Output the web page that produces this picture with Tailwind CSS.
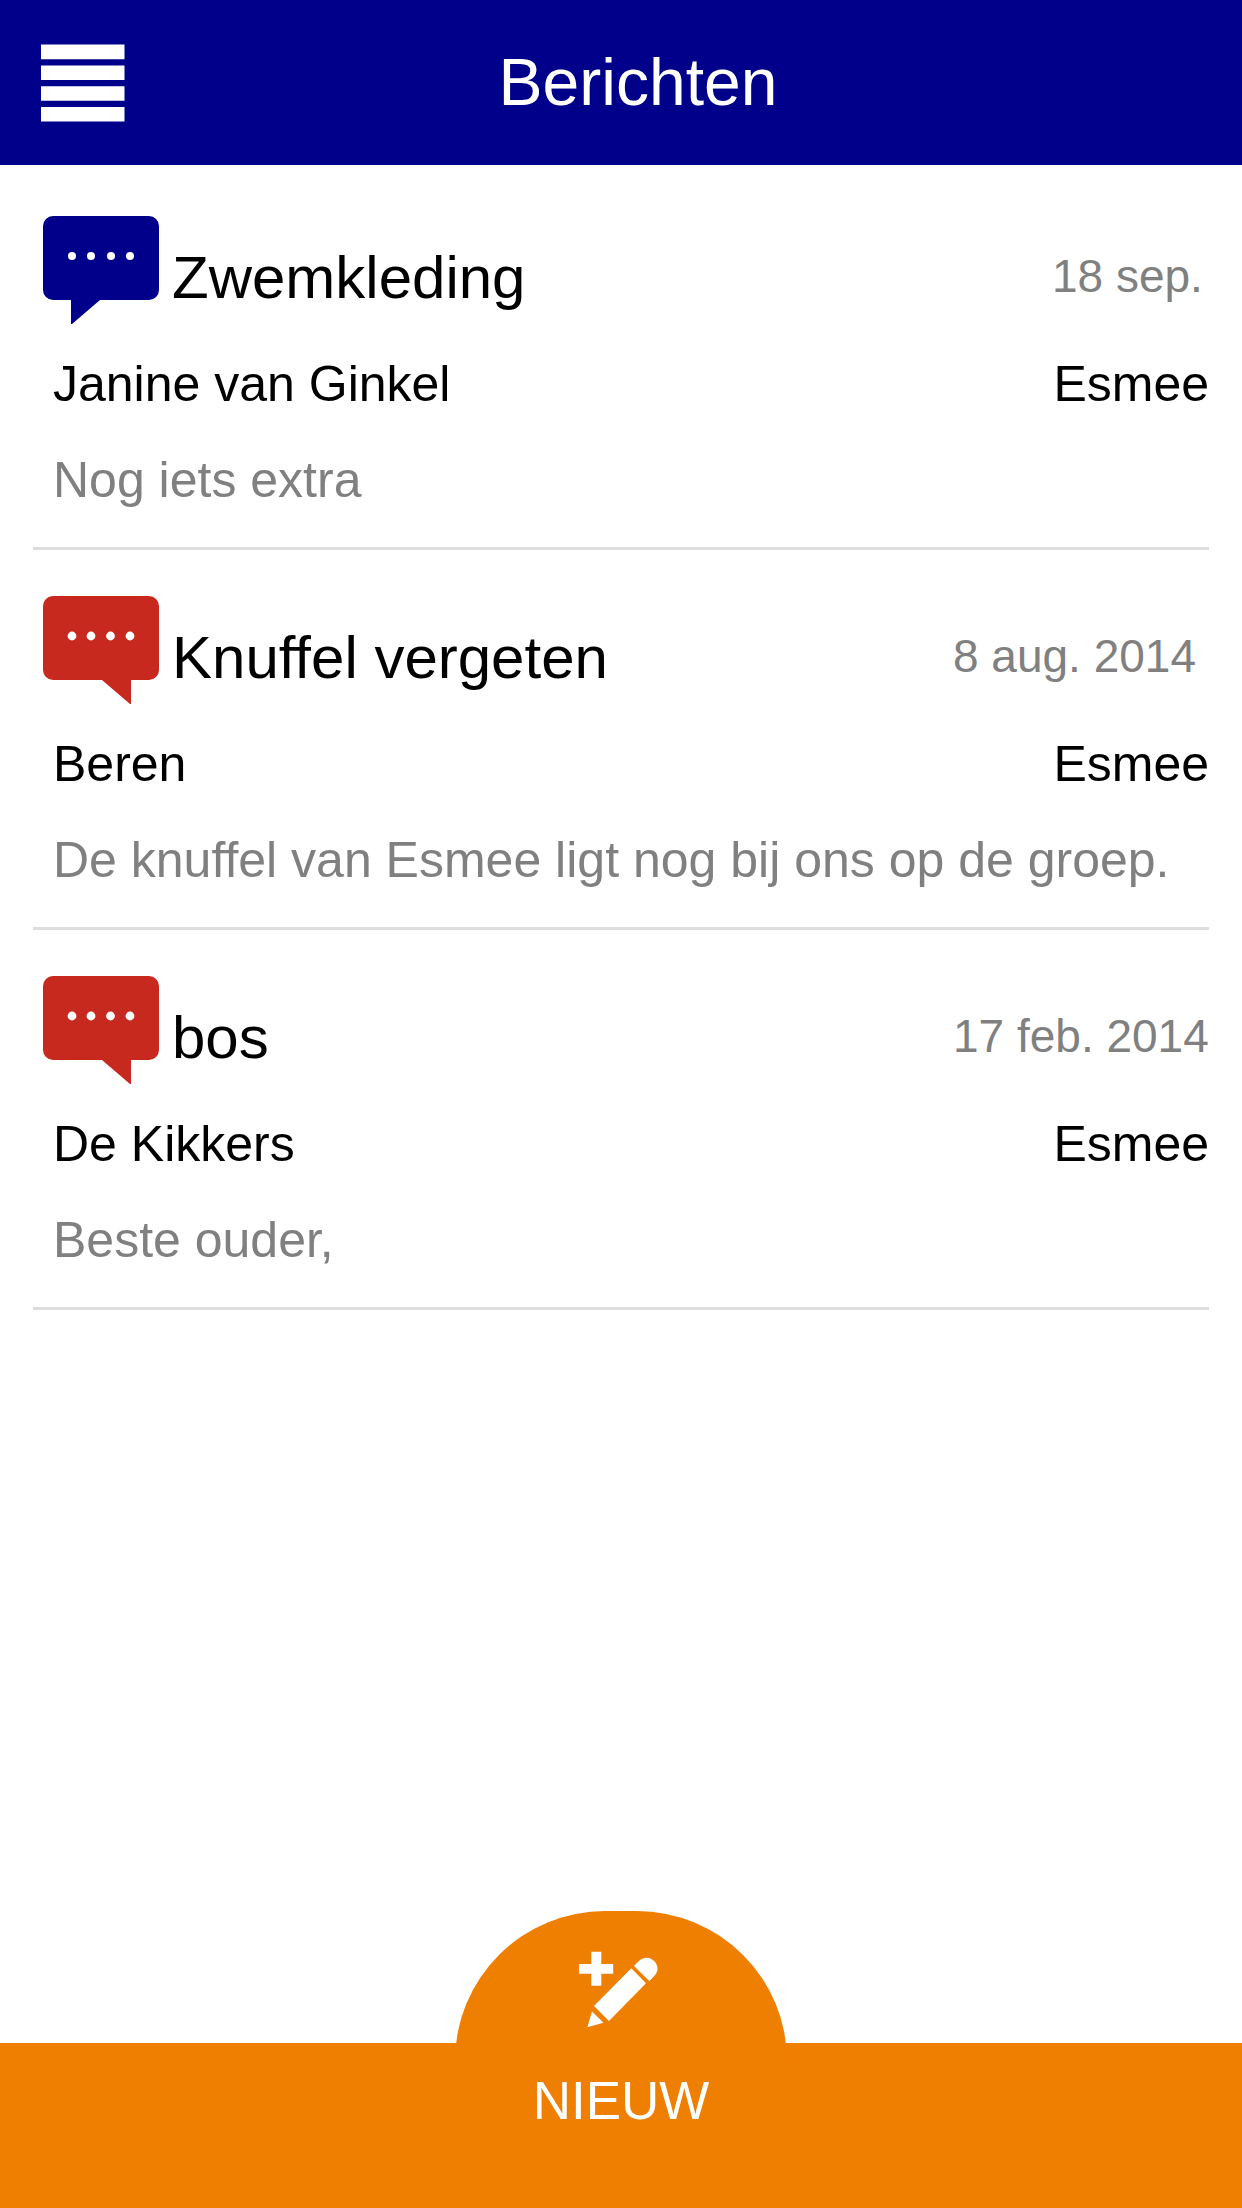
<!DOCTYPE html>
<html lang="nl">
<head>
<meta charset="utf-8">
<meta name="viewport" content="width=device-width, initial-scale=1">
<title>Berichten</title>
<script src="https://cdn.jsdelivr.net/npm/@tailwindcss/browser@4"></script>
</head>
<body class="flex min-h-screen flex-col bg-white font-['Liberation_Sans',Arial,sans-serif] text-black">
  <svg class="hidden" aria-hidden="true">
    <symbol id="bubble-left" viewBox="0 0 116 108">
      <path fill="currentColor" d="M10 0H106A10 10 0 0 1 116 10V74A10 10 0 0 1 106 84H57L29 108H28V84H10A10 10 0 0 1 0 74V10A10 10 0 0 1 10 0Z"/>
      <g fill="#fff"><circle cx="29" cy="40" r="4"/><circle cx="48" cy="40" r="4"/><circle cx="68" cy="40" r="4"/><circle cx="87" cy="40" r="4"/></g>
    </symbol>
    <symbol id="bubble-right" viewBox="0 0 116 108">
      <path fill="currentColor" d="M10 0H106A10 10 0 0 1 116 10V74A10 10 0 0 1 106 84H88V108H87L59 84H10A10 10 0 0 1 0 74V10A10 10 0 0 1 10 0Z"/>
      <g fill="#fff"><circle cx="29" cy="40" r="4.4"/><circle cx="48" cy="40" r="4.4"/><circle cx="67.500" cy="40" r="4.400"/><circle cx="87" cy="40" r="4.400"/></g>
    </symbol>
  </svg>

  <header class="flex h-[165px] items-center bg-[#00008b] pl-[41px] pr-[91px] text-white">
    <button type="button" aria-label="Menu">
      <svg class="h-[78px] w-[84px]" viewBox="0 0 84 78" fill="#fff"><path d="M0 .5H83.500V15.300H0ZM0 21.500H83.500V36H0ZM0 42.200H83.500V56.800H0ZM0 63H83.500V77.500H0Z"/></svg>
    </button>
    <h1 class="flex-1 text-center text-[66px] leading-[165px]">Berichten</h1>
  </header>

  <main class="flex-1 px-[33px] pt-[5px]">
    <ul>
      <li class="border-b-3 border-[#dddddd] pt-[46px] pb-[19px]">
        <div class="flex h-[108px] items-end pl-[10px]">
          <svg class="h-[108px] w-[116px] shrink-0 text-[#00008b]" aria-hidden="true"><use href="#bubble-left"/></svg>
          <h2 class="flex-1 pl-[13px] text-[60px] leading-[92px]">Zwemkleding</h2>
          <time class="w-[157px] text-[46px] leading-[96px] whitespace-nowrap text-[#808080]">18 sep.</time>
        </div>
        <div class="mt-3 flex justify-between pl-5 text-[50px] leading-[96px]"><span>Janine van Ginkel</span><span>Esmee</span></div>
        <p class="pl-5 text-[50px] leading-[96px] text-[#808080]">Nog iets extra</p>
      </li>
      <li class="border-b-3 border-[#dddddd] pt-[46px] pb-[19px]">
        <div class="flex h-[108px] items-end pl-[10px]">
          <svg class="h-[108px] w-[116px] shrink-0 text-[#c8291e]" aria-hidden="true"><use href="#bubble-right"/></svg>
          <h2 class="flex-1 pl-[13px] text-[60px] leading-[92px]">Knuffel vergeten</h2>
          <time datetime="2014-08-08" class="w-[256px] text-[46px] leading-[96px] whitespace-nowrap text-[#808080]">8 aug. 2014</time>
        </div>
        <div class="mt-3 flex justify-between pl-5 text-[50px] leading-[96px]"><span>Beren</span><span>Esmee</span></div>
        <p class="pl-5 text-[50px] leading-[96px] text-[#808080]">De knuffel van Esmee ligt nog bij ons op de groep.</p>
      </li>
      <li class="border-b-3 border-[#dddddd] pt-[46px] pb-[19px]">
        <div class="flex h-[108px] items-end pl-[10px]">
          <svg class="h-[108px] w-[116px] shrink-0 text-[#c8291e]" aria-hidden="true"><use href="#bubble-right"/></svg>
          <h2 class="flex-1 pl-[13px] text-[60px] leading-[92px]">bos</h2>
          <time datetime="2014-02-17" class="w-[256px] text-[46px] leading-[96px] whitespace-nowrap text-[#808080]">17 feb. 2014</time>
        </div>
        <div class="mt-3 flex justify-between pl-5 text-[50px] leading-[96px]"><span>De Kikkers</span><span>Esmee</span></div>
        <p class="pl-5 text-[50px] leading-[96px] text-[#808080]">Beste ouder,</p>
      </li>
    </ul>
  </main>

  <footer class="sticky bottom-0 flex h-[165px] items-end justify-center bg-[#ef7f00]">
    <button type="button" class="flex h-[297px] w-[332px] shrink-0 flex-col items-center rounded-t-[150px] bg-[#ef7f00] pt-[39px] text-white">
      <svg class="h-20 w-[88px]" viewBox="0 0 88 80" fill="#fff" aria-hidden="true">
        <path d="M14.300 1.700H24.300V14H36.200V23.700H24.300V35.700H14.300V23.700H2V14H14.300Z"/>
        <path d="M54.300 18.300L69 33.300L32 71L17 56Z"/>
        <path d="M57 16C62 10.500 65 7.700 69.500 7.700C76 8 80.500 13 80.500 19C80.500 23 77.500 26 72.300 31Z"/>
        <path d="M15 61.500L26.500 72.700L10.300 77.300Z"/>
      </svg>
      <span class="mt-10 text-[53px] leading-[62px]">NIEUW</span>
    </button>
  </footer>
</body>
</html>
